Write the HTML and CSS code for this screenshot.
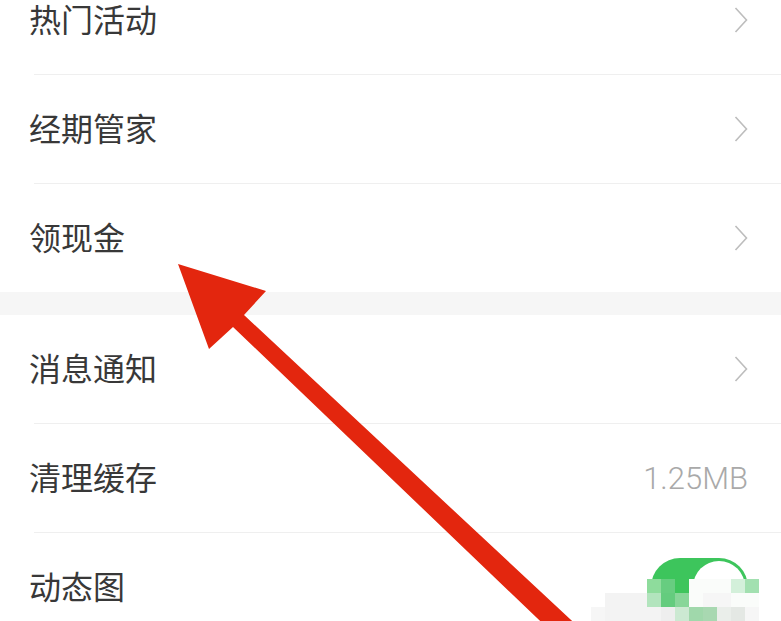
FILE: index.html
```html
<!DOCTYPE html>
<html lang="zh-CN">

<head>
    <meta charset="UTF-8">
    <meta name="viewport" content="width=device-width, initial-scale=1.0">
    <title>设置</title>
    <link rel="stylesheet" href="styles.css">
</head>

<body>
    <div class="page">
        <div class="group first">
            <div class="item">
                <span class="label">热门活动</span>
                <svg class="chevron" width="14" height="26" viewBox="0 0 14 26"><polyline points="1.5,1 12.5,13 1.5,25" /></svg>
            </div>
            <div class="item">
                <span class="label">经期管家</span>
                <svg class="chevron" width="14" height="26" viewBox="0 0 14 26"><polyline points="1.5,1 12.5,13 1.5,25" /></svg>
            </div>
            <div class="item">
                <span class="label">领现金</span>
                <svg class="chevron" width="14" height="26" viewBox="0 0 14 26"><polyline points="1.5,1 12.5,13 1.5,25" /></svg>
            </div>
        </div>

        <div class="gap"></div>

        <div class="group">
            <div class="item">
                <span class="label">消息通知</span>
                <svg class="chevron" width="14" height="26" viewBox="0 0 14 26"><polyline points="1.5,1 12.5,13 1.5,25" /></svg>
            </div>
            <div class="item">
                <span class="label">清理缓存</span>
                <span class="value">1.25MB</span>
            </div>
            <div class="item">
                <span class="label">动态图</span>
                <div class="toggle on"><div class="knob"></div></div>
            </div>
        </div>

        <!-- red arrow drawn over the screenshot -->
        <svg class="arrow" width="781" height="621" viewBox="0 0 781 621">
            <polygon points="178,264 266,291 244,315 585,633 560,640 233,327 209,349" />
        </svg>

        <!-- mosaic watermark -->
        <div class="mosaic">
            <i></i><i></i><i></i><i></i>
            <i class="g1"></i><i class="g2"></i><i class="g3"></i><i class="w"></i><i class="w"></i><i class="w"></i><i class="g4"></i><i class="g5"></i>

            <i></i><i class="l"></i><i class="l"></i><i class="l"></i>
            <i class="g6"></i><i class="g7"></i><i class="g8"></i><i class="w"></i><i class="l2"></i><i class="l2"></i><i class="w"></i><i class="w"></i>

            <i class="l2"></i><i class="l"></i><i class="l"></i><i class="l"></i>
            <i class="l"></i><i class="l3"></i><i class="g9"></i><i class="g10"></i><i class="g11"></i><i class="l4"></i><i class="l5"></i><i class="l2"></i>
        </div>
    </div>
</body>

</html>
```

FILE: styles.css
```css
* {
    padding: 0;
    margin: 0;
    box-sizing: border-box;
}

body {
    background-color: #fff;
    overflow: hidden;
    font-family: "Noto Sans CJK SC", "Noto Sans", sans-serif;
}

.page {
    position: relative;
    width: 781px;
    height: 621px;
    overflow: hidden;
}

.group.first {
    margin-top: -34px;
}

.item {
    display: flex;
    align-items: center;
    justify-content: space-between;
    height: 109px;
    margin-left: 34px;
    padding-right: 33px;
    border-bottom: 1px solid #efefef;
}

.item:last-child {
    border-bottom: none;
    height: 108px;
}

.label {
    margin-left: -5px;
    margin-bottom: 4px;
    font-size: 32px;
    color: #383838;
}

.chevron polyline {
    fill: none;
    stroke: #bdbdbd;
    stroke-width: 1.6;
}

.value {
    font-family: Roboto, "Noto Sans", sans-serif;
    font-weight: 300;
    font-size: 31px;
    color: #a9a9a9;
}

.gap {
    height: 23px;
    background-color: #f6f6f6;
}

.toggle {
    width: 97px;
    height: 58px;
    border-radius: 29px;
    background-color: #3dc55c;
    padding: 3px;
    display: flex;
    justify-content: flex-end;
}

.knob {
    width: 52px;
    height: 52px;
    border-radius: 50%;
    background-color: #fff;
}

.arrow {
    position: absolute;
    left: 0;
    top: 0;
}

.arrow polygon {
    fill: #e3260e;
}

.mosaic {
    position: absolute;
    left: 591px;
    top: 579px;
    display: grid;
    grid-template-columns: repeat(12, 14px);
    grid-auto-rows: 14px;
}

.mosaic i { display: block; }
.mosaic .w { background-color: #fafcfa; }
.mosaic .l { background-color: #f3f3f3; }
.mosaic .l2 { background-color: #f6f6f6; }
.mosaic .l3 { background-color: #eeeeee; }
.mosaic .l4 { background-color: #eaeeea; }
.mosaic .l5 { background-color: #e4e8e4; }
.mosaic .g1 { background-color: #8edc9c; }
.mosaic .g2 { background-color: #67cd80; }
.mosaic .g3 { background-color: #3ec55c; }
.mosaic .g4 { background-color: #d3f0da; }
.mosaic .g5 { background-color: #a2e0b0; }
.mosaic .g6 { background-color: #b2e4bd; }
.mosaic .g7 { background-color: #64cc7e; }
.mosaic .g8 { background-color: #88d699; }
.mosaic .g9 { background-color: #cce9d2; }
.mosaic .g10 { background-color: #a0d8ab; }
.mosaic .g11 { background-color: #a8d8b1; }
```
